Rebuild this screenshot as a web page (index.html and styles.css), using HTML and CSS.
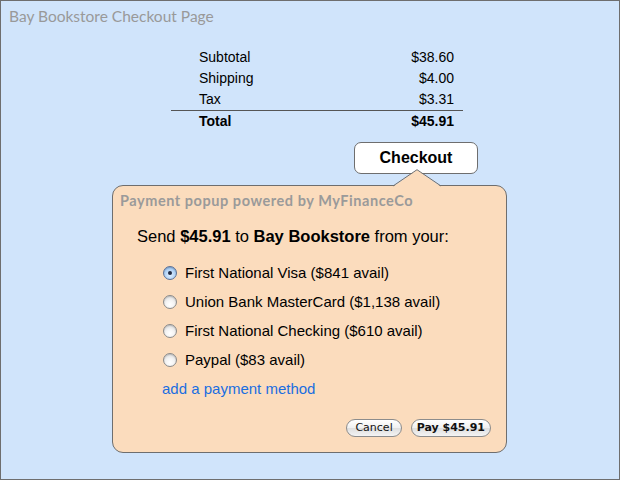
FILE: index.html
```html
<!DOCTYPE html>
<html>
<head>
<meta charset="utf-8">
<link rel="stylesheet" href="styles.css">
</head>
<body>
<div class="frame">
  <div class="page-title">Bay Bookstore Checkout Page</div>
  <div class="totals">
    <div class="row"><span>Subtotal</span><span>$38.60</span></div>
    <div class="row"><span>Shipping</span><span>$4.00</span></div>
    <div class="row"><span>Tax</span><span>$3.31</span></div>
    <div class="row total"><span>Total</span><span>$45.91</span></div>
  </div>
  <div class="checkout">Checkout</div>
  <div class="popup">
    <svg class="pointer" width="48" height="18" viewBox="0 0 48 18">
      <polygon points="1,17 24,1 47,17" fill="#fbdcbd"/>
      <polyline points="0,17 24,0.7 48,17" fill="none" stroke="#6e6e6e" stroke-width="1"/>
    </svg>
    <div class="popup-title">Payment popup powered by MyFinanceCo</div>
    <div class="send">Send <b>$45.91</b> to <b>Bay Bookstore</b> from your:</div>
    <div class="options">
      <label class="opt"><span class="radio on"></span>First National Visa ($841 avail)</label>
      <label class="opt"><span class="radio"></span>Union Bank MasterCard ($1,138 avail)</label>
      <label class="opt"><span class="radio"></span>First National Checking ($610 avail)</label>
      <label class="opt"><span class="radio"></span>Paypal ($83 avail)</label>
      <div class="add">add a payment method</div>
    </div>
    <div class="actions">
      <span class="btn">Cancel</span>
      <span class="btn bold">Pay $45.91</span>
    </div>
  </div>
</div>
</body>
</html>
```
FILE: styles.css
```css
html, body { margin: 0; padding: 0; }
body { font-family: "Liberation Sans", Arial, sans-serif; }
.frame {
  width: 620px; height: 480px; box-sizing: border-box;
  border: 1px solid #6e6e6e; background: #d0e4fb;
  position: relative; overflow: hidden;
}
.page-title {
  font-family: "Lato", "DejaVu Sans", sans-serif;
  color: #999; font-size: 15.5px; line-height: 20px;
  padding: 5px 0 0 8px;
}
.totals { width: 292px; margin: 21px 0 0 170px; font-size: 14px; color: #000; }
.row { display: flex; justify-content: space-between; height: 21px; line-height: 21px; padding: 0 9px 0 28px; }
.row.total { border-top: 1px solid #555; font-weight: bold; height: 20px; line-height: 20px; }
.checkout {
  margin: 11px 0 0 353px; width: 124px; height: 32px; box-sizing: border-box;
  background: #fff; border: 1px solid #6e6e6e; border-radius: 7px;
  text-align: center; line-height: 30px; font-weight: bold; font-size: 16px;
}
.popup {
  position: relative;
  margin: 11px 0 0 111px; width: 395px; height: 268px; box-sizing: border-box;
  background: #fbdcbd; border: 1px solid #6e6e6e; border-radius: 11px;
}
.pointer { position: absolute; left: 280px; top: -17px; display: block; }
.popup-title {
  font-family: "Lato", "DejaVu Sans", sans-serif; font-weight: bold;
  color: #9a9a9a; font-size: 14.5px; letter-spacing: 0.55px; line-height: 20px; padding: 5px 0 0 7px;
}
.send { font-size: 16.5px; line-height: 20px; margin: 15px 0 0 24px; }
.options { margin: 12px 0 0 49px; font-size: 15px; }
.opt { display: flex; align-items: center; height: 29px; }
.radio {
  width: 14px; height: 14px; box-sizing: border-box; border-radius: 50%;
  border: 1px solid #8a8a8a; margin-right: 8px; margin-left: 1px;
  background: radial-gradient(circle at 50% 70%, #ffffff 0%, #f4f4f4 40%, #cfcfcf 100%);
  box-shadow: inset 0 1px 1px rgba(0,0,0,0.15);
  position: relative;
}
.radio.on {
  border-color: #5a6f95;
  background: radial-gradient(circle at 50% 65%, #e2f0ff 0%, #a9cdf3 60%, #6f9dd6 100%);
}
.radio.on::after {
  content: ""; position: absolute; left: 4px; top: 4px; width: 4px; height: 4px;
  border-radius: 50%; background: #1f2a44;
}
.add { color: #1a6ee0; font-size: 15px; line-height: 20px; margin-top: 5px; }
.actions {
  display: flex; justify-content: flex-end; gap: 9px;
  margin: 20px 15px 0 0;
}
.btn {
  font-family: "DejaVu Sans", "Liberation Sans", sans-serif; font-size: 11px;
  height: 18px; line-height: 16px; box-sizing: border-box; padding: 0 8px;
  border: 1px solid #8c8c8c; border-radius: 9px;
  background: linear-gradient(#ffffff, #f0f0f0 50%, #dedede 51%, #f4f4f4);
  color: #111;
}
.btn.bold { font-weight: bold; padding: 0 5px; }
```
